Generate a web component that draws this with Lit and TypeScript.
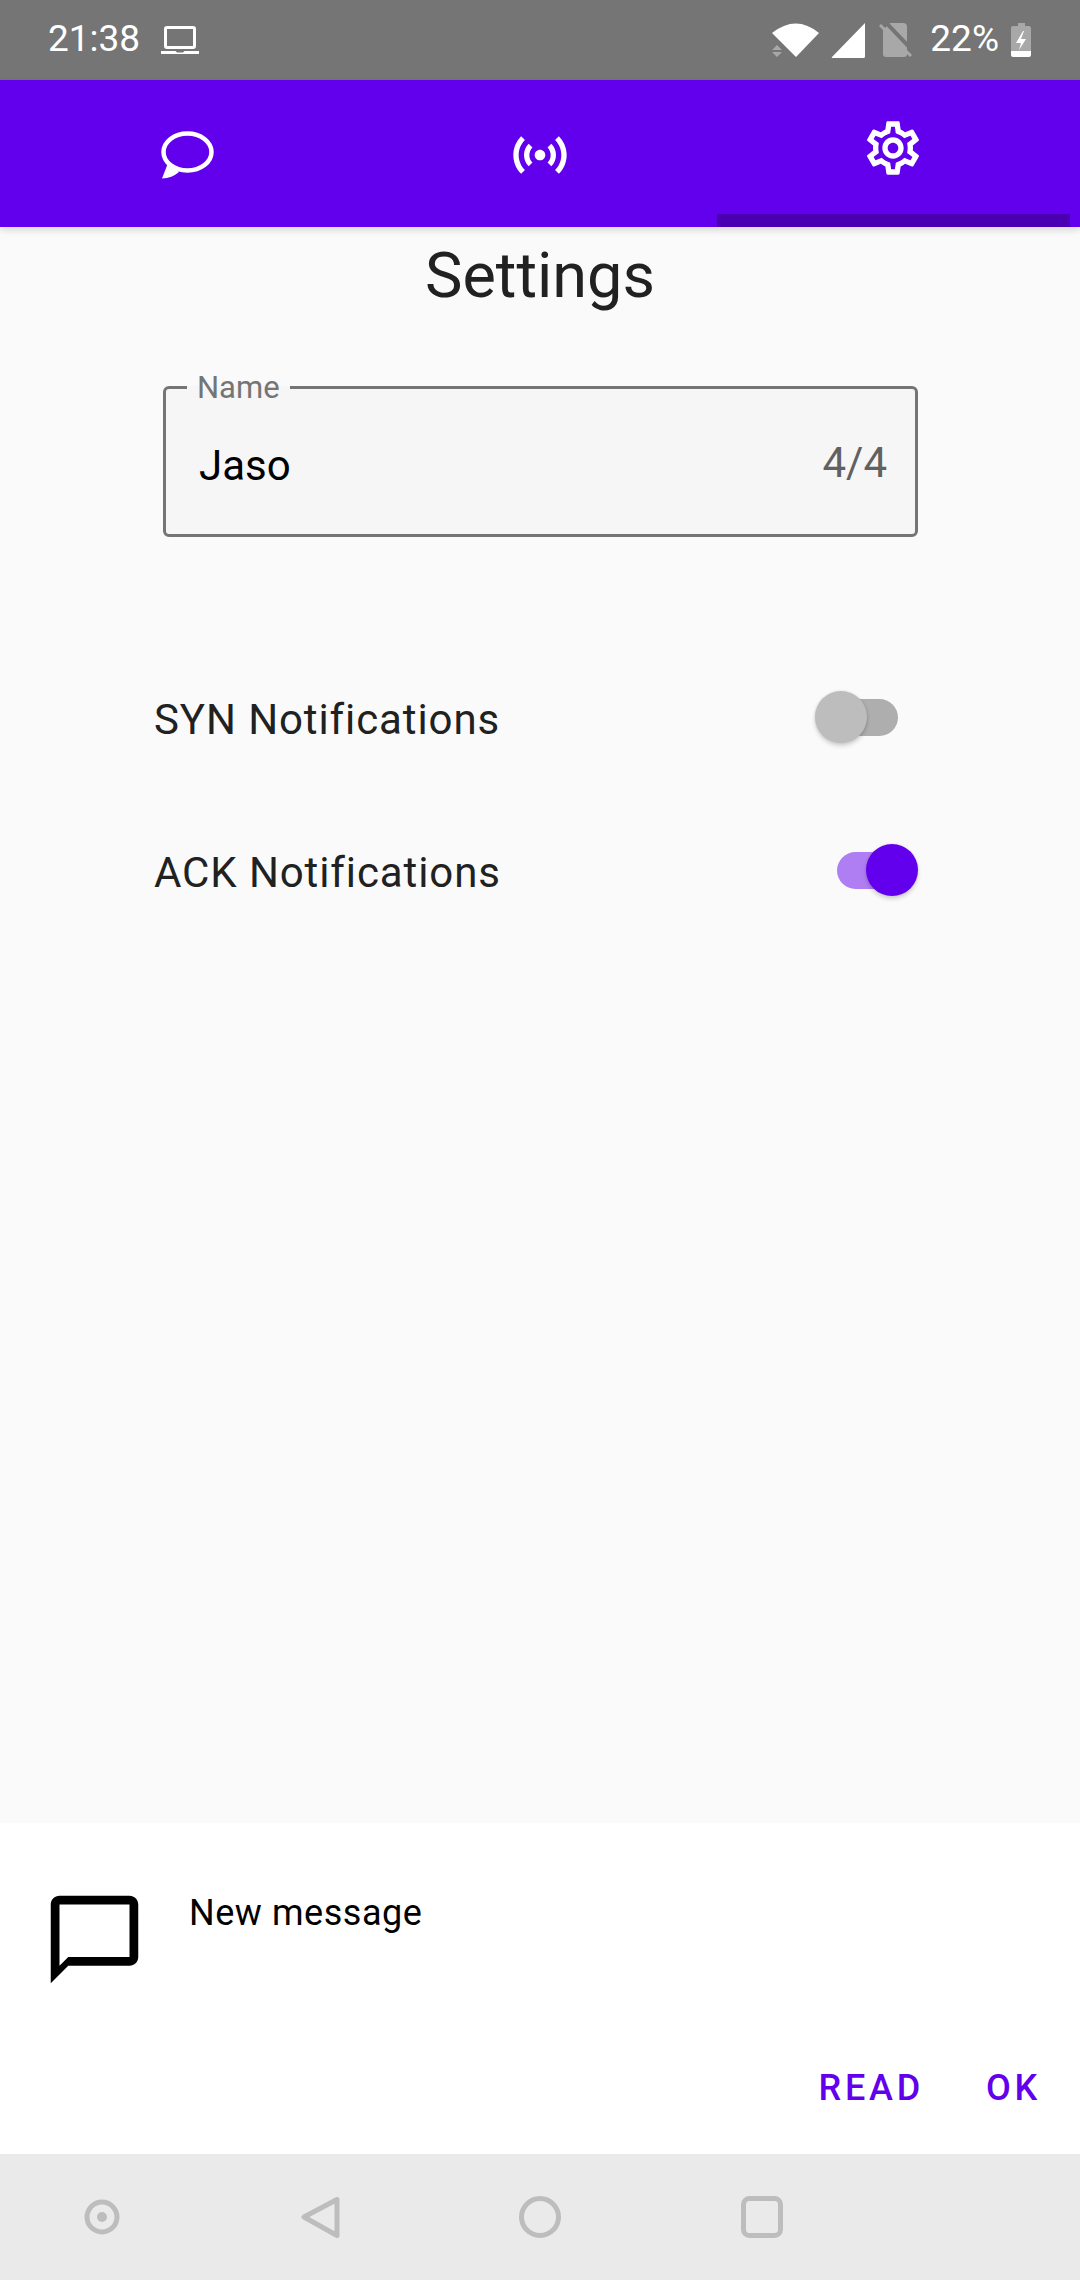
import { LitElement, css, html } from "lit";
import { customElement, property } from "lit/decorators.js";

const GEAR =
  "M19.43 12.98c.04-.32.07-.64.07-.98 0-.34-.03-.66-.07-.98l2.11-1.65c.19-.15.24-.42.12-.64l-2-3.46c-.09-.16-.26-.25-.44-.25-.06 0-.12.01-.17.03l-2.49 1c-.52-.4-1.08-.73-1.69-.98l-.38-2.65C14.46 2.18 14.25 2 14 2h-4c-.25 0-.46.18-.49.42l-.38 2.65c-.61.25-1.17.59-1.69.98l-2.49-1c-.06-.02-.12-.03-.18-.03-.17 0-.34.09-.43.25l-2 3.46c-.13.22-.07.49.12.64l2.11 1.65c-.04.32-.07.65-.07.98 0 .33.03.66.07.98l-2.11 1.65c-.19.15-.24.42-.12.64l2 3.46c.09.16.26.25.44.25.06 0 .12-.01.17-.03l2.49-1c.52.4 1.08.73 1.69.98l.38 2.65c.03.24.24.42.49.42h4c.25 0 .46-.18.49-.42l.38-2.65c.61-.25 1.17-.59 1.69-.98l2.49 1c.06.02.12.03.18.03.17 0 .34-.09.43-.25l2-3.46c.12-.22.07-.49-.12-.64l-2.11-1.65zm-1.98-1.71c.04.31.05.52.05.73 0 .21-.02.43-.05.73l-.14 1.13.89.7 1.08.84-.7 1.21-1.27-.51-1.04-.42-.9.68c-.43.32-.84.56-1.25.73l-1.06.43-.16 1.13-.2 1.35h-1.4l-.19-1.35-.16-1.13-1.06-.43c-.43-.18-.83-.41-1.23-.71l-.91-.7-1.06.43-1.27.51-.7-1.21 1.08-.84.89-.7-.14-1.13c-.03-.31-.05-.54-.05-.74s.02-.43.05-.73l.14-1.13-.89-.7-1.08-.84.7-1.21 1.27.51 1.04.42.9-.68c.43-.32.84-.56 1.25-.73l1.06-.43.16-1.13.2-1.35h1.39l.19 1.35.16 1.13 1.06.43c.43.18.83.41 1.23.71l.91.7 1.06-.43 1.27-.51.7 1.21-1.07.85-.89.7.14 1.13zM12 8c-2.21 0-4 1.79-4 4s1.79 4 4 4 4-1.79 4-4-1.79-4-4-4zm0 6c-1.1 0-2-.9-2-2s.9-2 2-2 2 .9 2 2-.9 2-2 2z";
const SENSORS =
  "M7.76 16.24C6.67 15.16 6 13.66 6 12s.67-3.16 1.76-4.24l1.42 1.42C8.45 9.9 8 10.9 8 12c0 1.1.45 2.1 1.17 2.83l-1.41 1.41zm8.48 0C17.33 15.16 18 13.66 18 12s-.67-3.16-1.76-4.24l-1.42 1.42C15.55 9.9 16 10.9 16 12c0 1.1-.45 2.1-1.17 2.83l1.41 1.41zM12 10c-1.1 0-2 .9-2 2s.9 2 2 2 2-.9 2-2-.9-2-2-2zm8 2c0 2.21-.9 4.21-2.35 5.65l1.42 1.42C20.88 17.26 22 14.76 22 12s-1.12-5.26-2.93-7.07l-1.42 1.42C19.1 7.79 20 9.79 20 12zM6.35 6.35L4.93 4.93C3.12 6.74 2 9.24 2 12s1.12 5.26 2.93 7.07l1.42-1.42C4.9 16.21 4 14.21 4 12s.9-4.21 2.35-5.65z";
const CHAT_OUTLINE =
  "M20 2H4c-1.1 0-2 .9-2 2v18l4-4h14c1.1 0 2-.9 2-2V4c0-1.1-.9-2-2-2zm0 14H6l-2 2V4h16v12z";

@customElement("toggle-switch")
class ToggleSwitch extends LitElement {
  @property({ type: Boolean }) on = false;

  static styles = css`
    :host {
      display: block;
      position: relative;
      width: 103px;
      height: 54px;
    }
    .track {
      position: absolute;
      top: 8px;
      left: 20px;
      width: 63px;
      height: 37px;
      border-radius: 19px;
      background: #aeaeae;
    }
    .thumb {
      position: absolute;
      top: 0;
      left: 0;
      width: 52px;
      height: 52px;
      border-radius: 50%;
      background: #bdbdbd;
      box-shadow: 0 3px 4px rgba(0, 0, 0, 0.16), 0 0 3px rgba(0, 0, 0, 0.1);
    }
    .on .track {
      left: 22px;
      background: #b07ef3;
    }
    .on .thumb {
      left: 51px;
      background: #6200ee;
    }
  `;

  render() {
    return html`<div class=${this.on ? "on" : ""}>
      <div class="track"></div>
      <div class="thumb"></div>
    </div>`;
  }
}

@customElement("app-root")
class AppRoot extends LitElement {
  static styles = css`
    :host {
      display: block;
      width: 1080px;
      height: 2280px;
      font-family: Roboto, sans-serif;
    }
    svg {
      display: block;
      flex: none;
    }
    .page {
      display: flex;
      flex-direction: column;
      height: 2280px;
      background: #fafafa;
    }

    .status {
      display: flex;
      align-items: center;
      height: 80px;
      padding: 0 49px 0 48px;
      box-sizing: border-box;
      background: #757575;
      color: #fff;
      font-size: 37px;
      line-height: 42px;
    }
    .status span {
      position: relative;
      top: -1px;
    }
    .laptop {
      margin-left: 20px;
    }
    .wifi {
      margin-left: auto;
    }
    .signal {
      margin-left: 11px;
    }
    .sim {
      margin-left: 14px;
    }
    .pct {
      margin-left: 18px;
    }
    .battery {
      margin-left: 12px;
    }

    .tabs {
      display: grid;
      grid-template-columns: repeat(3, 1fr);
      height: 147px;
      padding: 0 10px;
      box-sizing: border-box;
      background: #6200ee;
      box-shadow: 0 3px 7px rgba(0, 0, 0, 0.14);
      position: relative;
    }
    .tab {
      display: flex;
      align-items: center;
      justify-content: center;
      fill: #fff;
    }
    .tab.active {
      border-bottom: 13px solid #4a00b2;
      align-items: flex-start;
      padding-top: 36px;
      box-sizing: border-box;
    }
    .tab .antenna {
      margin-top: 3px;
    }

    .content {
      flex: 1;
    }
    h1 {
      margin: 14px 0 59px;
      font-size: 63px;
      font-weight: 400;
      line-height: 70px;
      text-align: center;
      color: #212121;
    }
    .field {
      display: block;
      margin: 0 0 0 163px;
      padding: 0;
      width: 755px;
      height: 167px;
      min-inline-size: 0;
      box-sizing: border-box;
      border: 3px solid #757575;
      border-radius: 6px;
      background: #f6f6f6;
    }
    .field legend {
      margin-left: 21px;
      padding: 0 10px;
      font-size: 31px;
      line-height: 35px;
      height: 35px;
      color: #757575;
    }
    .field-row {
      display: flex;
      align-items: baseline;
      justify-content: space-between;
      padding: 36px 28px 0 33px;
      line-height: 50px;
      font-size: 42px;
    }
    .value {
      color: #000;
    }
    .count {
      position: relative;
      top: -3px;
      color: #616161;
    }

    .rows {
      margin-top: 105px;
    }
    .row {
      display: flex;
      align-items: center;
      justify-content: space-between;
      height: 152.5px;
      padding: 0 162px 0 154px;
      font-size: 42px;
      letter-spacing: 0.9px;
      color: #212121;
    }
    .row span {
      position: relative;
      top: 1.5px;
    }

    .snackbar {
      display: flex;
      flex-direction: column;
      justify-content: space-between;
      height: 331px;
      padding: 64px 39px 45px 42px;
      box-sizing: border-box;
      background: #fff;
    }
    .message {
      display: flex;
      gap: 42px;
    }
    .message span {
      margin-top: 5px;
      font-size: 36px;
      line-height: 42px;
      letter-spacing: 0.55px;
      color: #000;
    }
    .actions {
      display: flex;
      justify-content: flex-end;
      gap: 62px;
      font-size: 36px;
      font-weight: 500;
      line-height: 42px;
      letter-spacing: 3.75px;
      color: #6200ee;
    }

    .nav {
      display: flex;
      align-items: center;
      gap: 160px;
      height: 126px;
      padding-left: 70px;
      background: #eaeaea;
    }
  `;

  render() {
    return html`<div class="page">
      <div class="status">
        <span>21:38</span>
        <svg class="laptop" width="40" height="30" viewBox="0 0 40 30" fill="none">
          <rect x="5.500" y="2.500" width="29" height="20" rx="1.500" stroke="#fff" stroke-width="3" />
          <path d="M1 26h14.500l1.500 1.500h6l1.500-1.500H39v3H1z" fill="#fff" />
        </svg>
        <svg class="wifi" width="50" height="36" viewBox="0 0 50 36">
          <path d="M2 11Q26-8 49 11L26 35 17 26z" fill="#fff" />
          <path d="M2 28l5-5 5 5zM2 30l5 5 5-5z" fill="#a8a8a8" />
        </svg>
        <svg class="signal" width="34" height="35" viewBox="0 0 34 35">
          <path d="M34 0v33.500q0 1.500-1.500 1.500H1.500q-1.500 0-.5-1z" fill="#fff" />
        </svg>
        <svg class="sim" width="33" height="36" viewBox="0 0 33 36">
          <path d="M11 1h13q4 0 4 4v27q0 3-3 3H7q-3 0-3-3V8z" fill="#a8a8a8" />
          <path d="M4.500-2L36 31" stroke="#757575" stroke-width="4" />
          <path d="M1 3l31 31" stroke="#a8a8a8" stroke-width="3" />
        </svg>
        <span class="pct">22%</span>
        <svg class="battery" width="20" height="34" viewBox="0 0 20 34">
          <path d="M7 0h7v3h4q2 0 2 2v23H0V5q0-2 2-2h5z" fill="#a8a8a8" />
          <path d="M0 28h20v4q0 2-2 2H2q-2 0-2-2z" fill="#fff" />
          <path d="M12 8L5 20h5l-2 7 7-11h-5l3-8z" fill="#fff" />
        </svg>
      </div>

      <div class="tabs">
        <div class="tab">
          <svg width="64" height="64" viewBox="0 0 64 64">
            <ellipse cx="32.500" cy="30" rx="24" ry="18.500" fill="none" stroke="#fff" stroke-width="4.500" />
            <path d="M13 41L7 56.500Q17 56 24 50z" fill="#fff" />
          </svg>
        </div>
        <div class="tab">
          <svg class="antenna" width="64" height="64" viewBox="0 0 24 24"><path d=${SENSORS} /></svg>
        </div>
        <div class="tab active">
          <svg width="64" height="64" viewBox="0 0 24 24"><path d=${GEAR} /></svg>
        </div>
      </div>

      <div class="content">
        <h1>Settings</h1>
        <fieldset class="field">
          <legend>Name</legend>
          <div class="field-row">
            <span class="value">Jaso</span>
            <span class="count">4/4</span>
          </div>
        </fieldset>
        <div class="rows">
          <div class="row">
            <span>SYN Notifications</span>
            <toggle-switch></toggle-switch>
          </div>
          <div class="row">
            <span>ACK Notifications</span>
            <toggle-switch on></toggle-switch>
          </div>
        </div>
      </div>

      <div class="snackbar">
        <div class="message">
          <svg width="105" height="105" viewBox="0 0 24 24"><path d=${CHAT_OUTLINE} /></svg>
          <span>New message</span>
        </div>
        <div class="actions">
          <span>READ</span>
          <span>OK</span>
        </div>
      </div>

      <div class="nav">
        <svg width="60" height="60" viewBox="0 0 60 60" fill="none" stroke="#bdbdbd" stroke-width="5">
          <circle cx="32" cy="30" r="15" />
          <circle cx="32" cy="30" r="5" fill="#bdbdbd" stroke="none" />
        </svg>
        <svg width="60" height="60" viewBox="0 0 60 60" fill="none" stroke="#bdbdbd" stroke-width="5" stroke-linejoin="round">
          <path d="M47 12.500v36L14 30z" />
        </svg>
        <svg width="60" height="60" viewBox="0 0 60 60" fill="none" stroke="#bdbdbd" stroke-width="5">
          <circle cx="30" cy="30" r="18.500" />
        </svg>
        <svg width="60" height="60" viewBox="0 0 60 60" fill="none" stroke="#bdbdbd" stroke-width="5">
          <rect x="13.500" y="11.500" width="37" height="37" rx="6" />
        </svg>
      </div>
    </div>`;
  }
}
